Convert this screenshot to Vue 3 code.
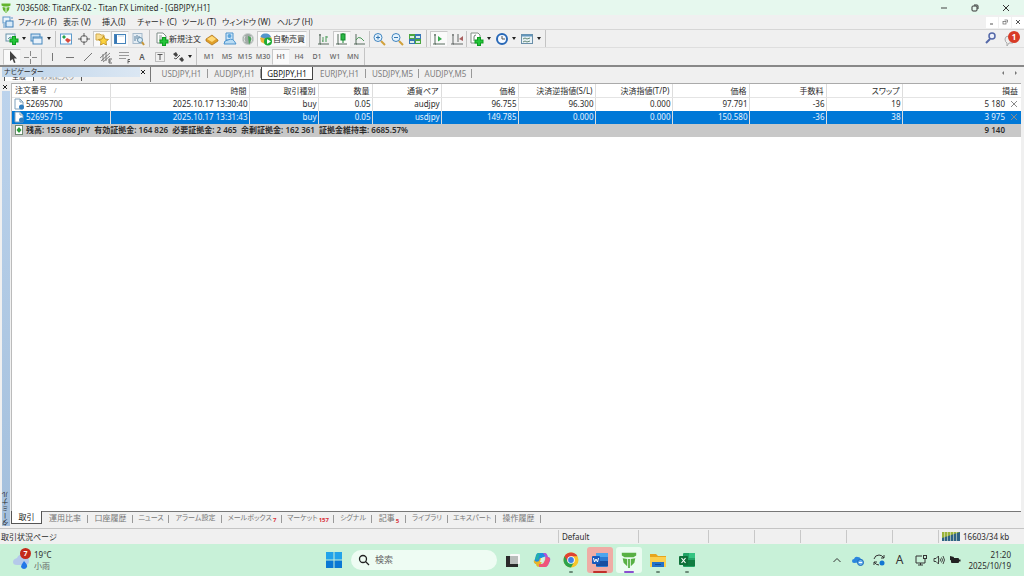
<script setup>
import { ref } from 'vue'

const menus = [
  { label: 'ファイル (F)', w: 45 },
  { label: '表示 (V)', w: 39 },
  { label: '挿入(I)', w: 35 },
  { label: 'チャート (C)', w: 45 },
  { label: 'ツール (T)', w: 40 },
  { label: 'ウィンドウ (W)', w: 55 },
  { label: 'ヘルプ (H)', w: 40 },
]
const periods = ['M1', 'M5', 'M15', 'M30', 'H1', 'H4', 'D1', 'W1', 'MN']
const charts = ['USDJPY,H1', 'AUDJPY,H1', 'GBPJPY,H1', 'EURJPY,H1', 'USDJPY,M5', 'AUDJPY,M5']
const activeChart = ref('GBPJPY,H1')
const activePeriod = ref('H1')

const columns = ['時間', '取引種別', '数量', '通貨ペア', '価格', '決済逆指値(S/L)', '決済指値(T/P)', '価格', '手数料', 'スワップ']
const orders = [
  { id: '52695700', cells: ['2025.10.17 13:30:40', 'buy', '0.05', 'audjpy', '96.755', '96.300', '0.000', '97.791', '-36', '19'], profit: '5 180' },
  { id: '52695715', cells: ['2025.10.17 13:31:43', 'buy', '0.05', 'usdjpy', '149.785', '0.000', '0.000', '150.580', '-36', '38'], profit: '3 975', selected: true },
]
const terminalTabs = [
  { label: '取引', active: true },
  { label: '運用比率' },
  { label: '口座履歴' },
  { label: 'ニュース', kana: true },
  { label: 'アラーム設定', kana: true },
  { label: 'メールボックス', count: 7, kana: true },
  { label: 'マーケット', count: 157, kana: true },
  { label: 'シグナル', kana: true },
  { label: '記事', count: 5 },
  { label: 'ライブラリ', kana: true },
  { label: 'エキスパート', kana: true },
  { label: '操作履歴' },
]
</script>

<template>
  <div class="window">
    <header class="titlebar">
      <svg class="logo" width="10" height="10" viewBox="0 0 20 20"><path d="M1 1h18v4l-4 2H5L1 5z M3 8l5 1v9l-4-4z M17 8l-5 1v9l4-4z M9 9h2v11H9z" fill="#62b52e" /></svg>
      <span class="title">7036508: TitanFX-02 - Titan FX Limited - [GBPJPY,H1]</span>
      <div class="win-buttons">
        <button aria-label="最小化"><svg width="8" height="8" viewBox="0 0 8 8"><path d="M1 4h6" stroke="#444" /></svg></button>
        <button aria-label="元に戻す"><svg width="8" height="8" viewBox="0 0 8 8" fill="none" stroke="#333"><rect x="1" y="2" width="5" height="5" rx="1" /><path d="M3 1h3q1 0 1 1v3" /></svg></button>
        <button aria-label="閉じる"><svg width="8" height="8" viewBox="0 0 8 8"><path d="M1 1l6 6M7 1l-6 6" stroke="#333" /></svg></button>
      </div>
    </header>

    <nav class="menubar">
      <svg class="app-icon" width="12" height="12" viewBox="0 0 12 12"><rect x="1" y="1" width="7" height="6" fill="#eaf4fc" stroke="#5b96c8" /><rect x="4" y="5" width="7" height="6" fill="#d9ebf9" stroke="#3f7fb8" /><path d="M1 9h3M1 11h3M9 2h2" stroke="#5b96c8" /></svg>
      <button v-for="m in menus" :key="m.label" :style="{ width: m.w + 'px' }">{{ m.label }}</button>
      <div class="mdi-buttons">
        <button aria-label="最小化"><svg width="6" height="6" viewBox="0 0 6 6"><path d="M1 5h3" stroke="#555" /></svg></button>
        <button aria-label="元に戻す"><svg width="6" height="6" viewBox="0 0 6 6" fill="none" stroke="#666" stroke-width=".7"><rect x="1" y="2.5" width="3" height="2.5" /><path d="M2.5 1h3v2.5" /></svg></button>
        <button aria-label="閉じる"><svg width="6" height="6" viewBox="0 0 6 6"><path d="M1 1l4 4M5 1L1 5" stroke="#555" /></svg></button>
      </div>
    </nav>

    <div class="toolbar main-tools">
      <div class="band">
        <button class="drop" aria-label="新規チャート"><svg width="14" height="14" viewBox="0 0 14 14"><rect x="1" y="2" width="9" height="7" fill="#eff7fb" stroke="#6a93aa" /><path d="M3 7l2-2 2 1" stroke="#6a93aa" fill="none" /><path d="M9 4v9M4.5 8.5h9" stroke="#0d9e20" stroke-width="4" /><path d="M9 5v7M5.5 8.5h7" stroke="#25c53a" stroke-width="2" /></svg><i class="caret"></i></button>
        <button class="drop" aria-label="表示"><svg width="14" height="14" viewBox="0 0 14 14"><rect x="1" y="2" width="9" height="7" fill="#cfe3f5" stroke="#4787bd" /><rect x="3" y="5" width="9" height="7" fill="#e8f2fb" stroke="#4787bd" /><path d="M3 6h9" stroke="#4787bd" /></svg><i class="caret"></i></button>
        <i class="sep"></i>
        <button aria-label="気配値表示"><svg width="14" height="14" viewBox="0 0 14 14"><rect x="1.5" y="2" width="11" height="10" fill="#f7fcff" stroke="#5d9acb" /><path d="M3 5l2-2 2 2-2 2z" fill="#26a24a" /><path d="M6 8l2-2 4 2-3 3z" fill="#d9493c" /></svg></button>
        <button aria-label="データウィンドウ"><svg width="14" height="14" viewBox="0 0 14 14" fill="none" stroke="#666"><circle cx="7" cy="7" r="3.5" /><path d="M7 1v4M7 9v4M1 7h4M9 7h4" /></svg></button>
        <button class="pressed" aria-label="ナビゲーター"><svg width="14" height="14" viewBox="0 0 14 14"><path d="M1 2h4l1 1h3v5H1z" fill="#f8dc8d" stroke="#d0a94e" /><path d="M8.5 4l1.500 3 3.500.5-2.500 2 .5 3.500-3-1.500-3 1.500.5-3.500-2.500-2L7 7z" fill="#fbd23e" stroke="#b88716" stroke-width=".8" /></svg></button>
        <button class="pressed" aria-label="ターミナル"><svg width="14" height="14" viewBox="0 0 14 14"><rect x="1.5" y="2.5" width="11" height="9" fill="#fff" stroke="#4483ba" /><path d="M2 3h2v8H2z" fill="#3876b4" /><path d="M5 4h6" stroke="#bfd6ea" /></svg></button>
        <button aria-label="ストラテジーテスター"><svg width="14" height="14" viewBox="0 0 14 14"><rect x="2" y="1.5" width="9" height="10" fill="#e4edf4" stroke="#a5bacb" /><path d="M4 4v5M6 3v4M8 4v3" stroke="#59809f" /><circle cx="9" cy="8" r="2.5" fill="#d8edf9" stroke="#6e93ad" /><path d="M11 10l2 3" stroke="#c69637" stroke-width="2" /></svg></button>
      </div>
      <div class="band">
        <button class="wide order"><svg width="14" height="14" viewBox="0 0 14 14"><path d="M2 1h6l3 3v7H2z" fill="#fff" stroke="#7f8d88" /><path d="M4 4h3M4 6h4M4 8h3" stroke="#8a9a95" /><path d="M9 5v9M4.5 9.5h9" stroke="#0d9e20" stroke-width="4" /><path d="M9 6v7M5.5 9.5h7" stroke="#25c53a" stroke-width="2" /></svg><span>新規注文</span></button>
        <button aria-label="メタエディター"><svg width="14" height="14" viewBox="0 0 14 14"><path d="M1 7l6-4 6 5v1l-6 4-6-4z" fill="#e0a02a" stroke="#a96f18" stroke-width=".7" /><path d="M2 7l5-3 4 3-4 3z" fill="#ffd978" /></svg></button>
        <button aria-label="コミュニティ"><svg width="14" height="14" viewBox="0 0 14 14"><path d="M3 1h7v7H3z" fill="#d0e7f9" stroke="#4c93cd" /><circle cx="6.5" cy="4" r="2" fill="#5ca5dc" /><path d="M1 12q0-4 4-4 5-3 8 4z" fill="#b9dcf4" stroke="#4c93cd" /></svg></button>
        <button aria-label="シグナル"><svg width="14" height="14" viewBox="0 0 14 14"><circle cx="7" cy="7" r="5.5" fill="#a2aaa7" stroke="#ccd2cf" /><path d="M4 4q-2 3 0 6M10 4q2 3 0 6" fill="none" stroke="#dfe4e1" /><path d="M7 4q4 1 3 4l-2 5z" fill="#47a354" /></svg></button>
        <button class="wide pressed auto"><svg width="14" height="14" viewBox="0 0 14 14"><path d="M1 6l6-4 6 4-1 3-6 3-4-2z" fill="#e9b63a" /><path d="M1.5 5q1-4 5-3.5 4-.5 5.500 3.500l-5 2z" fill="#5296cb" /><circle cx="9" cy="9.5" r="4" fill="#1eac35" /><path d="M8 7l4 2.500-4 2.500z" fill="#fff" /></svg><span>自動売買</span></button>
      </div>
      <div class="band chart-kind">
        <button aria-label="バーチャート"><svg width="14" height="14" viewBox="0 0 14 14" fill="none"><path d="M3 2v10h9M1 12h3M2 3h2" stroke="#576b5c" /><path d="M6 5v5M6 9H5M9 4v6M9 5h2" stroke="#4b9a59" /></svg></button>
        <button class="pressed" aria-label="ローソク足"><svg width="14" height="14" viewBox="0 0 14 14" fill="none"><path d="M3 2v10h9M1 12h3" stroke="#576b5c" /><path d="M8 1v10" stroke="#13882b" /><rect x="6" y="2" width="4" height="6" fill="#2ab845" stroke="#13882b" /></svg></button>
        <button aria-label="ラインチャート"><svg width="14" height="14" viewBox="0 0 14 14" fill="none"><path d="M3 2v10h9M1 12h3" stroke="#576b5c" /><path d="M3 8q2-4 5-2l3 3" stroke="#4b9a59" /></svg></button>
        <i class="sep"></i>
        <button aria-label="拡大"><svg width="14" height="14" viewBox="0 0 14 14"><path d="M9 9l4 4" stroke="#d1a13b" stroke-width="2" /><circle cx="6" cy="5.5" r="4" fill="#e5f3fd" stroke="#4185bf" /><path d="M4 5.5h4M6 3.5v4" stroke="#3476b1" /></svg></button>
        <button aria-label="縮小"><svg width="14" height="14" viewBox="0 0 14 14"><path d="M9 9l4 4" stroke="#d1a13b" stroke-width="2" /><circle cx="6" cy="5.5" r="4" fill="#e5f3fd" stroke="#4185bf" /><path d="M4 5.5h4" stroke="#3476b1" /></svg></button>
        <button aria-label="整列"><svg width="14" height="14" viewBox="0 0 14 14"><path d="M1 2h6v5H1zM7 7h6v5H7z" fill="#4ca641" /><path d="M7 2h6v5H7zM1 7h6v5H1z" fill="#3977b6" /><path d="M2 4h4v2H2zM8 4h4v2H8zM2 9h4v2H2zM8 9h4v2H8z" fill="#dcefe8" /></svg></button>
      </div>
      <div class="band">
        <button class="pressed" aria-label="自動スクロール"><svg width="14" height="14" viewBox="0 0 14 14" fill="none"><path d="M3 2v10h10M1 12h3M2 3h2" stroke="#576b5c" /><path d="M6 4l4 3-4 2.5z" fill="#34ac4b" /></svg></button>
        <button aria-label="チャートシフト"><svg width="14" height="14" viewBox="0 0 14 14" fill="none"><path d="M3 2v10h10M1 12h3M2 3h2M8 2v8" stroke="#626966" /><path d="M13 4L9 7l4 2z" fill="#a85e5e" /></svg></button>
        <i class="sep tight"></i>
        <button class="drop" aria-label="インディケーター"><svg width="14" height="14" viewBox="0 0 14 14"><path d="M1 1h7l2 2v8H1z" fill="#fff" stroke="#839087" /><path d="M4 9V5q0-2 2-2" fill="none" stroke="#6b7e72" /><path d="M9 5v9M4.5 9.5h9" stroke="#0d9e20" stroke-width="4" /><path d="M9 6v7M5.5 9.5h7" stroke="#25c53a" stroke-width="2" /></svg><i class="caret"></i></button>
        <button class="drop" aria-label="時間足"><svg width="14" height="14" viewBox="0 0 14 14"><circle cx="7" cy="7" r="5" fill="#f6faff" stroke="#2868b7" stroke-width="2" /><path d="M7 4v3h3" fill="none" stroke="#555" /></svg><i class="caret"></i></button>
        <button class="drop" aria-label="定型チャート"><svg width="14" height="14" viewBox="0 0 14 14"><rect x="1.5" y="2.5" width="11" height="9" fill="#e7f1f6" stroke="#6a8fa9" /><path d="M2 3.5h10" stroke="#6296bd" stroke-width="2" /><path d="M3 7l2-1 2 1 3-1M3 10l2-1 2 1 3-1" fill="none" stroke="#668b77" /></svg><i class="caret"></i></button>
      </div>
      <div class="tool-right">
        <button aria-label="検索"><svg width="14" height="14" viewBox="0 0 14 14"><path d="M6 8l-4 4" stroke="#5468a8" stroke-width="2" /><circle cx="8" cy="5" r="3" fill="#eef1fb" stroke="#5468a8" stroke-width="1.5" /></svg></button>
        <button class="chat" aria-label="通知"><svg width="16" height="16" viewBox="0 0 16 16"><path d="M2 9q0-3 4-3h4v7H6l-2 3v-3q-2-1-2-4z" fill="#eee" stroke="#aaa" /></svg><b>1</b></button>
      </div>
    </div>

    <div class="toolbar line-tools">
      <div class="band">
        <button class="pressed" aria-label="カーソル"><svg width="14" height="14" viewBox="0 0 14 14"><path d="M5 1v10l2.500-2 1.500 4 1.500-.5L9 8.500h3z" fill="#444" /></svg></button>
        <button aria-label="クロスヘア"><svg width="14" height="14" viewBox="0 0 14 14"><path d="M7.5 1v5M7.5 9v5M1 7.5h5M9 7.5h5" stroke="#888" /></svg></button>
        <i class="sep"></i>
        <button aria-label="垂直線"><svg width="14" height="14" viewBox="0 0 14 14"><path d="M7.5 3v8" stroke="#777" /></svg></button>
        <button aria-label="水平線"><svg width="14" height="14" viewBox="0 0 14 14"><path d="M3 7.5h8" stroke="#777" /></svg></button>
        <button aria-label="トレンドライン"><svg width="14" height="14" viewBox="0 0 14 14"><path d="M3 11l8-8" stroke="#777" /></svg></button>
        <button aria-label="チャネル"><svg width="14" height="14" viewBox="0 0 14 14"><path d="M1 8l7-6M2 11l9-8M4 12l7-6M4 4v7M7 2v9" stroke="#666" stroke-width=".8" /><path d="M13 9h-3v4h3M10 11h2" stroke="#444" fill="none" stroke-width=".8" /></svg></button>
        <button aria-label="フィボナッチ"><svg width="14" height="14" viewBox="0 0 14 14"><path d="M2 2.5h10M2 5.5h10M2 8.5h7" stroke="#999" /><path d="M13 9.5h-2v4M11 11.5h2" stroke="#444" fill="none" stroke-width=".8" /></svg></button>
        <button class="letter">A</button>
        <button aria-label="テキストラベル"><svg width="14" height="14" viewBox="0 0 14 14" fill="none"><rect x="2.5" y="2.5" width="9" height="9" stroke="#888" stroke-dasharray="1 1" /><path d="M4.5 4.5h5M7 4.5V10" stroke="#555" /></svg></button>
        <button class="drop" aria-label="矢印"><svg width="14" height="14" viewBox="0 0 14 14"><path d="M2 4l3-2 2 3-2 2zM8 9l3-2 2 3-2 2z" fill="#444" /><path d="M3 8l2 1 4-4" fill="none" stroke="#555" /></svg><i class="caret"></i></button>
      </div>
      <div class="band">
        <button v-for="p in periods" :key="p" class="period" :class="{ pressed: p === activePeriod }" @click="activePeriod = p">{{ p }}</button>
      </div>
    </div>

    <div class="chart-row">
      <aside class="navigator">
        <div class="nav-head"><span>ナビゲーター</span><button aria-label="閉じる"><svg width="6" height="6" viewBox="0 0 6 6"><path d="M1 1l4 4M5 1L1 5" stroke="#222" /></svg></button></div>
        <div class="nav-tabs"><span class="on">全般</span><span>お気に入り</span></div>
      </aside>
      <div class="chart-tabs">
        <button v-for="c in charts" :key="c" :class="{ on: c === activeChart }" @click="activeChart = c">{{ c }}</button>
      </div>
      <div class="tab-arrows">
        <button aria-label="前へ"><svg width="6" height="6" viewBox="0 0 6 6"><path d="M4 1L2 3l2 2z" fill="#777" /></svg></button>
        <button aria-label="次へ"><svg width="6" height="6" viewBox="0 0 6 6"><path d="M2 1l2 2-2 2z" fill="#777" /></svg></button>
      </div>
    </div>

    <main class="terminal">
      <div class="side">
        <button aria-label="閉じる"><svg width="6" height="6" viewBox="0 0 6 6"><path d="M1 1l4 4M5 1L1 5" stroke="#222" /></svg></button>
        <div class="side-label"><span>ターミナル</span></div>
      </div>
      <div class="pane">
        <div class="sheet">
          <table>
            <colgroup>
              <col class="c-id"><col class="c-time"><col class="c-type"><col class="c-lot"><col class="c-type">
              <col class="c-num"><col class="c-num"><col class="c-num"><col class="c-num"><col class="c-num"><col class="c-swap"><col>
            </colgroup>
            <thead>
              <tr>
                <th class="first">注文番号<span class="sort">/</span></th>
                <th v-for="(c, i) in columns" :key="i">{{ c }}</th>
                <th>損益</th>
              </tr>
            </thead>
            <tbody>
              <tr v-for="o in orders" :key="o.id" :class="{ selected: o.selected }">
                <td class="first">
                  <div class="ticket">
                    <svg width="10" height="12" viewBox="0 0 10 12"><path d="M1 1h5l3 3v7H1z" fill="#fff" stroke="#7fa0bb" /><path d="M6 1v3h3" fill="none" stroke="#7fa0bb" /><circle cx="7.5" cy="9" r="2.5" fill="#2f7fc2" /></svg>
                    <span>{{ o.id }}</span>
                  </div>
                </td>
                <td v-for="(v, i) in o.cells" :key="i">{{ v }}</td>
                <td class="last">
                  <div class="profit"><span>{{ o.profit }}</span><button aria-label="決済"><svg width="8" height="8" viewBox="0 0 8 8"><path d="M1 1l6 6M7 1L1 7" stroke="#8a8a8a" /></svg></button></div>
                </td>
              </tr>
              <tr class="balance">
                <td colspan="11" class="first">
                  <div class="ticket">
                    <svg width="10" height="10" viewBox="0 0 10 10"><rect x="1.5" y=".5" width="7" height="9" fill="#fff" stroke="#6d8a70" /><path d="M5 2l2.500 3L5 8 2.500 5z" fill="#2c9c3a" /></svg>
                    <span>残高: 155 686 JPY&nbsp; 有効証拠金: 164 826&nbsp; 必要証拠金: 2 465&nbsp; 余剰証拠金: 162 361&nbsp; 証拠金維持率: 6685.57%</span>
                  </div>
                </td>
                <td class="total">9 140</td>
              </tr>
            </tbody>
          </table>
        </div>
        <div class="term-tabs">
          <button v-for="t in terminalTabs" :key="t.label" :class="{ on: t.active, kana: t.kana }">{{ t.label }}<sub v-if="t.count">{{ t.count }}</sub></button>
        </div>
      </div>
    </main>

    <footer class="statusbar">
      <span class="grow">取引状況ページ</span>
      <span class="s80">Default</span>
      <span class="s70"></span><span class="s46"></span><span class="s46"></span><span class="s46"></span><span class="s46"></span><span class="s46"></span>
      <span class="net">
        <svg width="18" height="9" viewBox="0 0 18 9"><path d="M0 0h18v9H0z" fill="#9bb33c" /><path d="M0 9V6l18-6v9z" fill="#2f6285" /><path d="M2.5 0v9M5.5 0v9M8.5 0v9M11.5 0v9M14.5 0v9" stroke="#e5edd0" stroke-width=".6" /></svg>
        16603/34 kb
      </span>
    </footer>

    <div class="taskbar">
      <button class="weather">
        <span class="cloud">
          <svg width="20" height="20" viewBox="0 0 20 20"><path d="M5 15q-4 0-4-3 0-3 4-4 2-5 7-3 5 1 5 6 0 4-4 4z" fill="#b5c9ea" /><path d="M12 11q4 4 3 6-1 2-3 2t-3-2q0-2 3-6z" fill="#2377e8" /></svg>
          <b>7</b>
        </span>
        <span class="temps"><span>19°C</span><span class="dim">小雨</span></span>
      </button>
      <div class="apps">
        <button class="app start" aria-label="スタート"><svg width="18" height="18" viewBox="0 0 18 18"><path d="M1 1h7.500v7.500H1zM9.500 1H17v7.500H9.500z" fill="#22a3ea" /><path d="M1 9.500h7.500V17H1zM9.500 9.500H17V17H9.500z" fill="#0b78d4" /></svg></button>
        <label class="search"><svg width="12" height="12" viewBox="0 0 12 12" fill="none" stroke="#222"><circle cx="5" cy="5" r="3.5" stroke-width="1.3" /><path d="M7.5 7.5l3.500 3.500" stroke-width="1.3" /></svg><input type="text" placeholder="検索" aria-label="検索"></label>
        <button class="app" aria-label="タスクビュー"><svg width="18" height="18" viewBox="0 0 18 18"><rect x="6" y="3" width="10" height="10" rx="1" fill="#fafafa" /><path d="M2 5h4v8h8v3H2z" fill="#2a2a2a" /><path d="M6 5h8v8H6z" fill="#b9bdbb" /></svg></button>
        <button class="app" aria-label="Copilot"><svg width="18" height="18" viewBox="0 0 18 18"><path d="M5 2h6q2 0 2 3l-2 1q-3 0-4 4l-1 3H3q-3-2-1-5l1-4q1-2 2-2z" fill="#1d8fe1" /><path d="M10 2h2q2 0 3 4 3 0 2 4l-2 4q-1 2-4 2 1-1 2-5l-1-6z" fill="#b052d8" /><path d="M1 9q2 3 5 1l1-3h3L8 13q-1 3-3 3-2-1-2-3-3-1-2-4z" fill="#e8b52b" /><path d="M6 13h3q2-1 3-4l1-3q3 0 4 2l-2 6q-1 2-3 2H6z" fill="#f0557a" /><path d="M2 8l2-5q1-1 3-1L5 9z" fill="#24b2a6" /><path d="M8 7h3l-1 4H7z" fill="#d8f5e4" /></svg></button>
        <button class="app" aria-label="Chrome"><svg width="18" height="18" viewBox="0 0 18 18"><circle cx="9" cy="9" r="7.5" fill="#f7c52b" /><path d="M9 9L2.500 5.300A7.500 7.500 0 0 0 9 16.500l3-5.500z" fill="#2ba24c" /><path d="M9 5.300h6.500a7.500 7.500 0 0 0-13 0L6 11z" fill="#df4334" /><circle cx="9" cy="9" r="3.8" fill="#fff" /><circle cx="9" cy="9" r="2.9" fill="#3c7fe8" /></svg><i class="run"></i></button>
        <button class="app word" aria-label="Word"><svg width="18" height="18" viewBox="0 0 18 18"><rect x="5" y="2" width="12" height="14" rx="1" fill="#2b7cd3" /><path d="M5 2h12v4H5z" fill="#4ba5ee" /><path d="M5 10h12v5H5z" fill="#174ea0" /><rect x="1" y="5" width="8" height="8" rx="1" fill="#185abd" /><path d="M2.500 7l1 4L5 8l1.500 3 1-4" stroke="#fff" fill="none" /></svg><i class="run"></i></button>
        <button class="app titan" aria-label="TitanFX"><svg width="18" height="18" viewBox="0 0 20 20"><path d="M2 2h16v3l-3 2H5L2 5z M3 8l5 1v8l-4-4z M17 8l-5 1v8l4-4z M9 9h2v10H9z" fill="#58b044" /></svg><i class="run"></i></button>
        <button class="app" aria-label="エクスプローラー"><svg width="18" height="18" viewBox="0 0 18 18"><path d="M1 3h6l2 2h8v11H1z" fill="#e6a51d" /><path d="M1 6h16v10H1z" fill="#fbcf4d" /><path d="M3 11h12v5H3z" fill="#2372c9" /><path d="M6 13h6v1H6z" fill="#174f93" /></svg><i class="run"></i></button>
        <button class="app" aria-label="Excel"><svg width="18" height="18" viewBox="0 0 18 18"><rect x="5" y="2" width="12" height="14" rx="1" fill="#21a366" /><path d="M11 2h6v5h-6z" fill="#33c481" /><path d="M5 9h12v6H5z" fill="#107c41" /><rect x="1" y="5" width="9" height="9" rx="1" fill="#0f7039" /><path d="M3.500 7l4 5M7.500 7l-4 5" stroke="#fff" stroke-width="1.2" /></svg><i class="run"></i></button>
      </div>
      <div class="tray">
        <button aria-label="隠れているインジケーター"><svg width="14" height="14" viewBox="0 0 14 14"><path d="M3.500 9L7 5.500 10.500 9" fill="none" stroke="#333" /></svg></button>
        <button aria-label="OneDrive"><svg width="14" height="14" viewBox="0 0 14 14"><path d="M3 10q-2 0-2-2 0-2 2-2 1-3 4-2 2 0 3 2 2 0 2 3z" fill="#2b86dd" /><circle cx="9.5" cy="9.5" r="3" fill="#6fb4ee" stroke="#1767b8" /><path d="M8 9.5h3" stroke="#fff" /></svg></button>
        <button aria-label="更新"><svg width="14" height="14" viewBox="0 0 14 14" fill="none" stroke="#333"><path d="M2 6q1-4 5-4 3 0 5 3M12 2v3H9M2 12V9h3M2 9q2 3 5 3" /><circle cx="10" cy="10" r="2.5" fill="#1277d2" stroke="none" /></svg></button>
        <button class="ime">A</button>
        <button aria-label="ネットワーク"><svg width="14" height="14" viewBox="0 0 14 14" fill="none" stroke="#333"><path d="M8 3H2v7h9V8M4 12h5M6.500 10v2" /><rect x="9.5" y="2.5" width="3" height="3" /><path d="M11 5.500V8" /></svg></button>
        <button class="narrow" aria-label="音量"><svg width="12" height="14" viewBox="0 0 12 14" fill="none" stroke="#333" stroke-width=".9"><path d="M1 5.500h2L5.500 3v8L3 8.500H1zM7 5.500q1 1.500 0 3M8.500 4.500q2 2.500 0 5M10 3q3 4 0 8" /></svg></button>
        <button class="narrow" aria-label="バッテリー"><svg width="12" height="14" viewBox="0 0 12 14"><rect x="2" y="5" width="8" height="5" rx="1" fill="#222" /><path d="M10 6.500h1.500v2H10zM1 3l4 1-1 4-3-1z" fill="#222" /></svg></button>
        <div class="clock"><span>21:20</span><span>2025/10/19</span></div>
      </div>
    </div>
  </div>
</template>

<style>
html, body { background: #f0f0f0; }
</style>

<style scoped>
.window {
  display: flex;
  flex-direction: column;
  min-height: 100vh;
  background: #f0f0f0;
  color: #2c2c2c;
  font: 8px/12px "Noto Sans", "Noto Sans CJK JP", sans-serif;
  font-feature-settings: "palt";
  overflow: hidden;
}
.window * { box-sizing: border-box; }
button { font: inherit; font-feature-settings: inherit; color: inherit; background: none; border: 0; padding: 0; margin: 0; white-space: nowrap; }
svg { display: block; flex: none; }

.titlebar { display: flex; align-items: center; height: 15px; background: #e6f8ee; padding: 0 3px 0 1px; }
.title { margin-left: 5px; flex: 1; white-space: nowrap; }
.win-buttons { display: flex; }
.win-buttons button { width: 31px; height: 15px; display: grid; place-items: center; }

.menubar { display: flex; align-items: center; height: 14px; padding-left: 2px; }
.app-icon { margin-right: 4px; }
.menubar > button { text-align: left; }
.mdi-buttons { display: flex; gap: 1px; margin-left: auto; }
.mdi-buttons button { width: 12px; height: 11px; background: #fff; display: grid; place-items: center; }

.toolbar { display: flex; align-items: stretch; height: 18px; border-top: 1px solid #d6d6d6; }
.band { display: flex; align-items: center; padding: 0 2px 0 3px; border-right: 1px solid #c4c4c4; }
.band.chart-kind { padding: 0 2px 0 5px; }
.band button, .tool-right button { width: 18px; height: 16px; display: flex; align-items: center; justify-content: center; }
.band button.pressed { background: #fafafa; border: 1px solid; border-color: #c8c8c8 #eee #eee #c8c8c8; }
.band button.drop { width: 25px; gap: 3px; }
.band button.wide { width: 50px; gap: 0; }
.caret { border: 2px solid transparent; border-top: 3px solid #222; border-bottom: 0; }
.sep { width: 1px; height: 16px; margin: 0 1px 0 2px; background: #c4c4c4; }
.chart-kind .sep { margin: 0; }
.sep.tight { margin: 0 1px 0 0; }
.tool-right { display: flex; margin-left: auto; gap: 2px; padding-right: 4px; }
.tool-right .chat { position: relative; }
.chat b { position: absolute; right: 0; top: 1px; width: 12px; height: 12px; border-radius: 50%; background: #d83a26; color: #fff; font-size: 8px; line-height: 12px; text-align: center; }
.line-tools { border-top-color: #dedede; }
.letter { font-weight: 600; color: #555; }
.period { color: #666; font-size: 7px; font-weight: 500; }

.chart-row { display: flex; height: 18px; border-top: 2px solid #888; }
.navigator { width: 151px; padding-left: 2px; border-right: 1px solid #777; height: 15px; overflow: hidden; font-size: 7px; }
.nav-head { display: flex; align-items: center; justify-content: space-between; height: 10px; padding: 0 4px 0 2px; background: linear-gradient(90deg, #bdd3e9, #dbe7f3 138px, #f0f0f0 138px); line-height: 10px; }
.nav-tabs { display: flex; height: 4px; overflow: hidden; padding-left: 2px; color: #888; align-items: flex-end; }
.nav-tabs span { padding: 0 7px; line-height: 8px; border-right: 1px solid #555; }
.nav-tabs .on { color: #222; background: #fff; border-left: 1px solid #555; }
.chart-tabs { display: flex; height: 13px; margin-left: 4px; color: #808080; }
.chart-tabs button { width: 53px; line-height: 13px; position: relative; }
.chart-tabs button:not(.on)::after { content: ""; position: absolute; right: 0; top: 2px; height: 9px; border-right: 1px solid #999; }
.chart-tabs button.on { background: #fff; color: #222; border: 1px solid #444; border-top: 0; width: 52px; }
.tab-arrows { display: flex; gap: 7px; margin-left: auto; padding-right: 5px; align-items: center; height: 12px; }

.terminal { flex: 1; display: flex; padding: 0 3px 0 0; }
.side { width: 11px; display: flex; flex-direction: column; padding: 0 1px 0 2px; }
.side button { height: 8px; }
.side-label { flex: 1; background: linear-gradient(#bcd3ec, #a3bfdc); display: flex; align-items: flex-end; justify-content: center; line-height: 8px; font-size: 7px; }
.side-label span { writing-mode: vertical-rl; transform: rotate(180deg); }
.pane { flex: 1; min-width: 0; display: flex; flex-direction: column; }
.sheet { flex: 1; background: #fff; border-top: 1px solid #aaa; border-left: 1px solid #bbb; }
table { width: 100%; table-layout: fixed; border-collapse: collapse; }
.c-id { width: 98px; }
.c-time { width: 139px; }
.c-type { width: 69px; }
.c-lot { width: 54px; }
.c-num { width: 77px; }
.c-swap { width: 76px; }
th, td { font-weight: 400; text-align: right; padding: 0 1px 0 0; height: 13px; line-height: 12px; white-space: nowrap; border-right: 1px solid #ddd; }
th { padding-right: 2px; border-bottom: 1px solid #e4e4e4; }
th:last-child { padding-right: 3px; }
th:last-child, td:last-child { border-right: 0; }
th.first { text-align: left; padding-left: 3px; }
td.first { text-align: left; padding-left: 2px; }
.sort { color: #999; margin-left: 7px; font-size: 7px; }
.ticket { display: flex; align-items: center; gap: 2px; }
.selected { background: #0078d7; color: #e8f3fd; }
.profit { display: flex; justify-content: flex-end; align-items: center; gap: 5px; padding-right: 2px; }
tr.balance td { background: #c8c8c8; font-weight: 600; border: 0; }
tr.balance .total { padding-right: 16px; }

.term-tabs { display: grid; grid-template-columns: 31px 46px 45px 36px 53px 60px 52px 38px 34px 42px 48px 45px; height: 15px; border-top: 1px solid #777; color: #777; }
.term-tabs button { height: 12px; line-height: 12px; position: relative; }
.term-tabs button.kana { font-size: 7px; }
.term-tabs button:not(.on)::after { content: ""; position: absolute; right: 0; top: 3px; height: 8px; border-right: 1px solid #999; }
.term-tabs button.on { background: #fff; color: #222; border: 1px solid #555; border-top: 0; height: 13px; margin-top: -1px; }
.term-tabs sub { color: #d8323a; font-size: 6px; font-weight: 700; line-height: 1px; vertical-align: -2px; margin-left: 1px; }

.statusbar { display: flex; align-items: center; height: 16px; margin-top: 2px; border-top: 1px solid #c4c4c4; }
.statusbar > span { height: 13px; line-height: 13px; border-left: 1px solid #c8c8c8; padding-left: 3px; white-space: nowrap; }
.statusbar .grow { flex: 1; border: 0; padding-left: 1px; }
.s80 { width: 80px; }
.s70 { width: 70px; }
.s46 { width: 46px; }
.statusbar .net { width: 86px; display: flex; align-items: center; gap: 3px; }

.taskbar { display: flex; align-items: center; height: 32px; background: #c8f1d8; }
.weather { flex: 1; display: flex; align-items: center; gap: 2px; padding-left: 12px; line-height: 11px; text-align: left; }
.cloud { position: relative; }
.cloud b { position: absolute; left: 8px; top: -2px; width: 11px; height: 11px; border-radius: 50%; background: #c42b1c; color: #fff; font-size: 7px; line-height: 11px; text-align: center; }
.temps { display: flex; flex-direction: column; }
.dim { color: #666; }
.apps { display: flex; align-items: center; gap: 3px; padding-left: 2px; }
.app { position: relative; width: 26px; height: 26px; border-radius: 3px; display: grid; place-items: center; }
.app.start { width: 18px; margin-right: 5px; }
.word { background: #efaca5; }
.titan { background: #eafbf0; }
.run { position: absolute; bottom: 0; left: 11px; width: 4px; height: 2px; border-radius: 1px; background: #6c8a78; }
.word .run { left: 6px; width: 14px; background: #c0302a; }
.titan .run { left: 8px; width: 10px; background: #8a4fd0; }
.search { display: flex; align-items: center; gap: 5px; width: 146px; height: 20px; border-radius: 10px; background: #eefcf3; padding: 0 7px; }
.search input { flex: 1; min-width: 0; border: 0; background: none; padding: 0; outline: 0; font: inherit; font-size: 9px; }
.search input::placeholder { color: #666; opacity: 1; }
.tray { flex: 1; display: flex; justify-content: flex-end; align-items: center; padding-right: 13px; }
.tray button { width: 21px; display: grid; place-items: center; }
.tray .narrow { width: 16px; }
.tray .ime { font-size: 12px; color: #333; }
.clock { display: flex; flex-direction: column; align-items: flex-end; line-height: 11px; width: 48px; }
</style>
